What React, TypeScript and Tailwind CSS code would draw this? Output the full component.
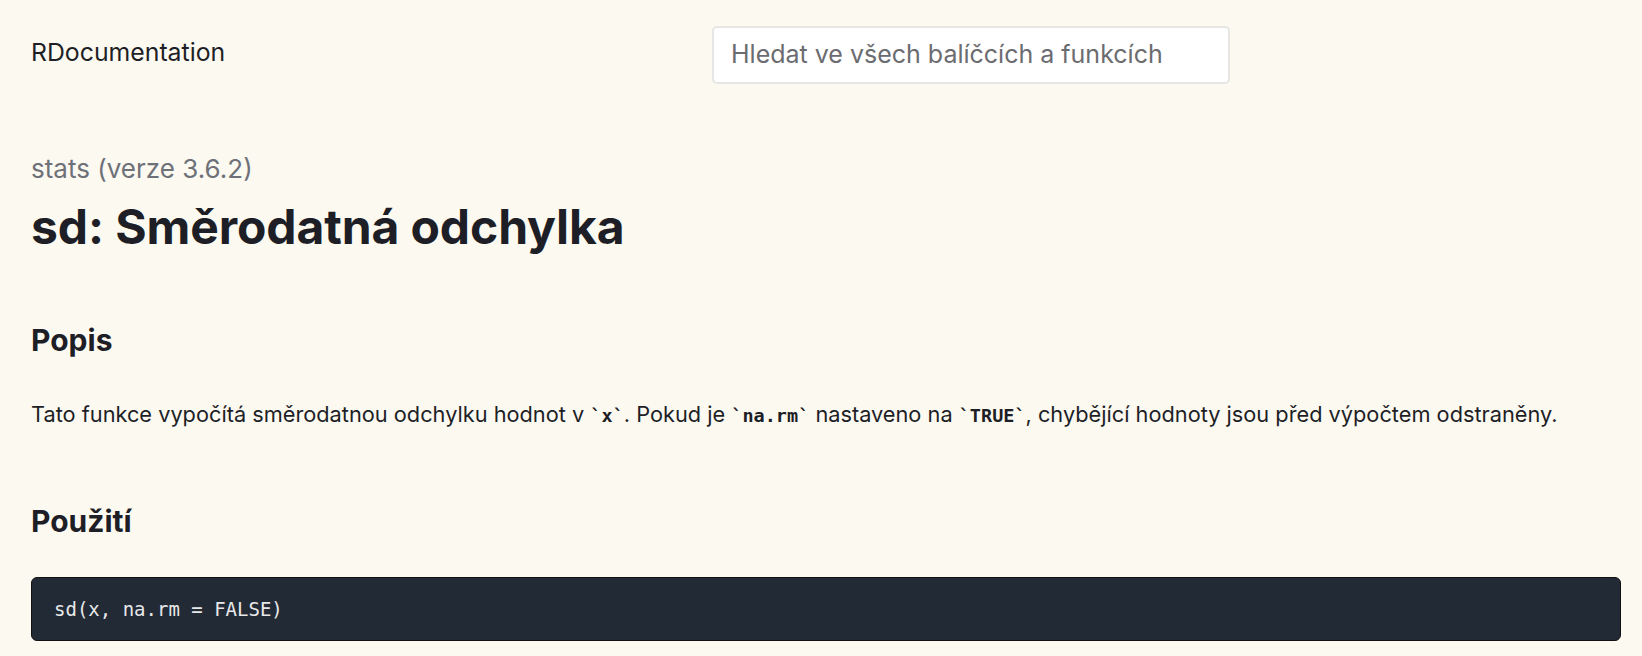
import React from 'react';

const sans = "font-['Inter','Liberation_Sans',sans-serif]";
const mono = "font-['DejaVu_Sans_Mono','Liberation_Mono',monospace]";

const InlineCode = ({ children }: { children: React.ReactNode }) => (
  <span className={`${mono} font-bold text-[18.5px]`}>`{children}`</span>
);

const App = () => {
  return (
    <div className={`min-h-screen bg-[#fcf9f1] text-[#1e1f26] ${sans}`}>
      <header className="flex items-center h-[112px] pl-[31px] pr-[21px] pb-[3px]">
        <div className="w-[681px] text-[24.8px] leading-none -mt-[5px]">RDocumentation</div>
        <div className="w-[518px] h-[58px] bg-white border-2 border-[#e6e6e4] rounded-[5px] flex items-center px-[17px]">
          <span className="text-[25px] text-[#6b6c70]">Hledat ve všech balíčcích a funkcích</span>
        </div>
      </header>

      <main className="pl-[31px] pr-[21px]">
        <p className="text-[26px] text-[#6e7178] mt-[41px] leading-[32px]">stats (verze 3.6.2)</p>
        <h1 className="text-[48px] font-bold leading-[56px] mt-[14px] tracking-[-0.1px]">
          sd: Směrodatná odchylka
        </h1>

        <h2 className="text-[30px] font-bold mt-[67px] leading-[36px]">Popis</h2>
        <p className="text-[21.75px] mt-[41px] leading-[30px]">
          Tato funkce vypočítá směrodatnou odchylku hodnot v <InlineCode>x</InlineCode>. Pokud je{' '}
          <InlineCode>na.rm</InlineCode> nastaveno na <InlineCode>TRUE</InlineCode>, chybějící hodnoty
          jsou před výpočtem odstraněny.
        </p>

        <h2 className="text-[30px] font-bold mt-[72px] leading-[36px]">Použití</h2>
        <pre
          className={`${mono} mt-[38px] bg-[#222a36] text-[#e8e8ea] text-[19px] rounded-[6px] border border-[#111] h-[64px] flex items-center px-[22px]`}
        >
          sd(x, na.rm = FALSE)
        </pre>
      </main>
    </div>
  );
};

export default App;
